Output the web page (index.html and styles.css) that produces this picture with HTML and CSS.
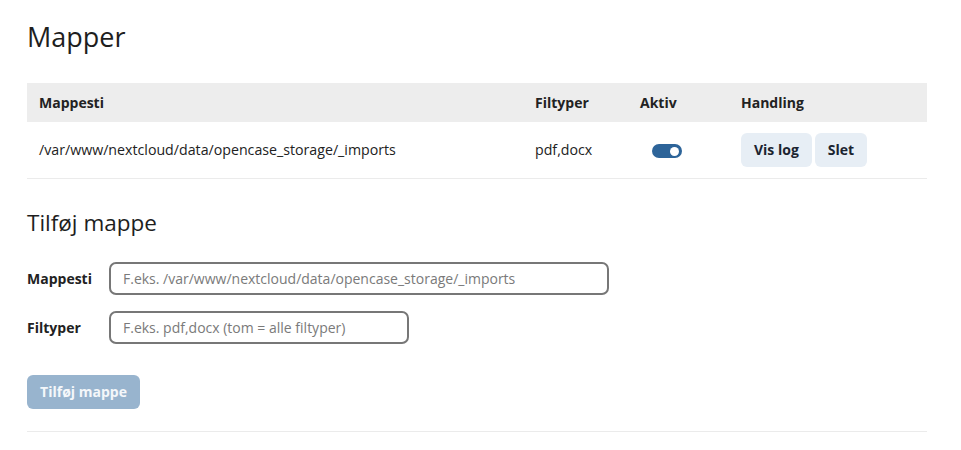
FILE: index.html
```html
<!DOCTYPE html>
<html lang="da">
<head>
<meta charset="utf-8">
<title>Mapper</title>
<link rel="stylesheet" href="styles.css">
</head>
<body>
<main class="page">
  <h1 class="title">Mapper</h1>
  <table class="folders">
    <thead>
      <tr>
        <th class="col-path">Mappesti</th>
        <th class="col-types">Filtyper</th>
        <th class="col-active">Aktiv</th>
        <th class="col-action">Handling</th>
      </tr>
    </thead>
    <tbody>
      <tr>
        <td>/var/www/nextcloud/data/opencase_storage/_imports</td>
        <td>pdf,docx</td>
        <td><span class="toggle"><span class="knob"></span></span></td>
        <td><div class="actions"><button class="btn-light">Vis log</button><button class="btn-light">Slet</button></div></td>
      </tr>
    </tbody>
  </table>

  <section class="add">
    <h2 class="subtitle">Tilføj mappe</h2>
    <div class="field">
      <label class="label" for="path">Mappesti</label>
      <input class="input input-wide" id="path" type="text" placeholder="F.eks. /var/www/nextcloud/data/opencase_storage/_imports">
    </div>
    <div class="field">
      <label class="label" for="types">Filtyper</label>
      <input class="input input-narrow" id="types" type="text" placeholder="F.eks. pdf,docx (tom = alle filtyper)">
    </div>
    <button class="btn-primary" disabled>Tilføj mappe</button>
  </section>
  <hr class="rule">
</main>
</body>
</html>
```
FILE: styles.css
```css
* { box-sizing: border-box; }
html, body { margin: 0; padding: 0; background: #fff; }
body {
  font-family: "Open Sans", "Noto Sans", "Liberation Sans", sans-serif;
  color: #222;
  font-size: 14px;
}
.page {
  width: 900px;
  margin-left: 27px;
  padding-top: 18px;
}
.title {
  font-size: 27px;
  font-weight: 500;
  line-height: 38px;
  margin: 0 0 27px 0;
  color: #1e1e1e;
}
.folders {
  width: 900px;
  border-collapse: collapse;
  table-layout: fixed;
}
.folders th {
  background: #ededed;
  height: 39px;
  text-align: left;
  font-weight: 700;
  font-size: 14px;
  padding: 0 12px;
}
.folders td {
  height: 56px;
  padding: 0 12px;
  border-bottom: 1px solid #ebebeb;
  font-size: 14.2px;
  vertical-align: middle;
}
.col-path { width: 496px; }
.col-types { width: 105px; }
.col-active { width: 101px; }
.col-action { width: 198px; }
.toggle {
  display: inline-flex;
  align-items: center;
  justify-content: flex-end;
  width: 30px;
  height: 14px;
  border-radius: 7px;
  background: #2d6499;
  padding: 0 3px;
  margin-left: 12px;
  vertical-align: middle;
}
.knob {
  width: 9px;
  height: 9px;
  border-radius: 50%;
  background: #fff;
}
.actions {
  display: flex;
  gap: 3px;
}
.btn-light {
  font-family: inherit;
  font-size: 14px;
  font-weight: 700;
  color: #1b2430;
  background: #e7eef5;
  border: 0;
  border-radius: 6px;
  height: 34px;
  padding: 0 13px;
}
.add { padding-top: 28px; }
.subtitle {
  font-size: 22.5px;
  font-weight: 500;
  line-height: 32px;
  margin: 0 0 23px 0;
  color: #1e1e1e;
}
.field {
  display: flex;
  align-items: center;
  margin-bottom: 16px;
}
.label {
  width: 82px;
  font-weight: 700;
  font-size: 14px;
}
.input {
  height: 33px;
  border: 2px solid #777;
  border-radius: 7px;
  padding: 0 12px;
  font-family: inherit;
  font-size: 14px;
  color: #222;
}
.input::placeholder { color: #7a7a7a; }
.input-wide { width: 500px; }
.input-narrow { width: 300px; }
.btn-primary {
  margin-top: 15px;
  height: 34px;
  width: 113px;
  border: 0;
  border-radius: 6px;
  background: #98b4ce;
  color: #f4f7fa;
  font-family: inherit;
  font-weight: 700;
  font-size: 14px;
}
.rule {
  border: 0;
  border-top: 1px solid #ebebeb;
  margin: 22px 0 0 0;
}
```
